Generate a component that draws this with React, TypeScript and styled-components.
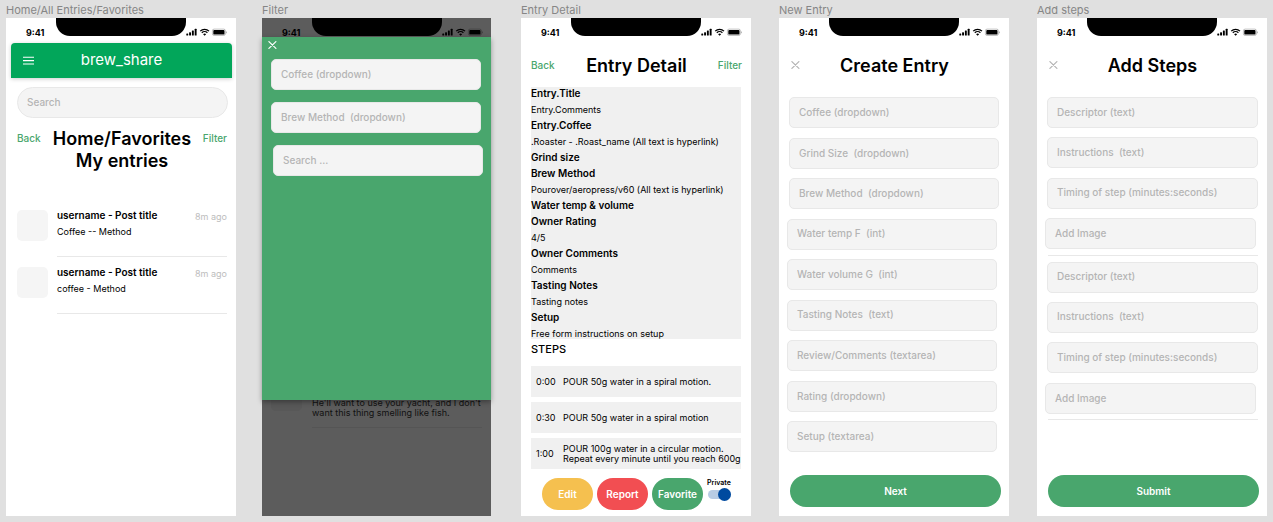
import React from 'react';
import styled, { createGlobalStyle, css } from 'styled-components';

const GlobalStyle = createGlobalStyle`
  *, *::before, *::after { box-sizing: border-box; }
  body {
    margin: 0;
    background: #e0e0e0;
    color: #000;
    font-family: Inter, "Liberation Sans", sans-serif;
  }
  button, input, select, textarea { font: inherit; }
`;

const green = '#49a66d';

/* ---------- board ---------- */

const Board = styled.main`
  display: flex;
  min-height: 100vh;
  padding: 0 6px 6px;
`;

const Artboard = styled.section<{ $gap?: number }>`
  display: flex;
  flex: 1 1 0;
  flex-direction: column;
  min-width: 0;
  margin-left: ${(p) => p.$gap ?? 0}px;
`;

const ArtboardName = styled.h2`
  height: 18px;
  margin: 0;
  color: #868686;
  font-size: 11px;
  font-weight: 400;
  line-height: 20px;
  white-space: nowrap;
`;

const Phone = styled.div<{ $dimmed?: boolean }>`
  display: flex;
  flex: 1;
  flex-direction: column;
  margin-right: ${(p) => (p.$dimmed ? 1 : 0)}px;
  background: ${(p) => (p.$dimmed ? '#5c5c5c' : '#fff')};
`;

/* ---------- status bar ---------- */

const StatusBar = styled.div<{ $short?: boolean }>`
  display: grid;
  grid-template-columns: 1fr 130px 1fr;
  height: ${(p) => (p.$short ? 19 : 25)}px;
`;

const Clock = styled.span`
  padding-left: 20px;
  font-size: 9px;
  font-weight: 700;
  line-height: 29px;
`;

const Notch = styled.div`
  height: 18px;
  background: #000;
  border-radius: 0 0 14px 14px;
`;

const Signals = styled.svg`
  display: block;
  width: 41px;
  height: 8px;
  margin-top: 10px;
`;

function Status({ short }: { short?: boolean }) {
  return (
    <StatusBar $short={short}>
      <Clock>9:41</Clock>
      <Notch />
      <Signals viewBox="0 0 41 8" aria-hidden="true">
        <rect x="0.3" y="5.6" width="1.9" height="2" rx="0.5" />
        <rect x="3.1" y="4.3" width="1.9" height="3.3" rx="0.5" />
        <rect x="5.9" y="2.6" width="1.9" height="5" rx="0.5" />
        <rect x="8.7" y="0.8" width="1.9" height="6.8" rx="0.5" />
        <path d="M14.2 3.1a6.3 6.3 0 0 1 8.8 0" fill="none" stroke="#000" strokeWidth="1.3" />
        <path d="M15.8 4.8a4 4 0 0 1 5.6 0" fill="none" stroke="#000" strokeWidth="1.2" />
        <path d="M17.1 6.3a2.2 2.2 0 0 1 3 0L18.6 7.8z" />
        <rect x="26.4" y="1.1" width="13" height="6.4" rx="1.7" fill="none" stroke="#000" strokeOpacity="0.4" strokeWidth="0.6" />
        <rect x="27.3" y="2" width="11.2" height="4.6" rx="0.9" />
        <path d="M40 3.2v2.3q.8-.3.8-1.15T40 3.2z" opacity="0.4" />
      </Signals>
    </StatusBar>
  );
}

/* ---------- shared parts ---------- */

const PageHead = styled.header`
  display: grid;
  grid-template-columns: 1fr auto 1fr;
  padding: 12px 9px 10px 10px;
  line-height: 22px;
`;

const PageTitle = styled.h1`
  margin: 0;
  font-size: 18px;
  font-weight: 600;
  line-height: 22px;
  text-align: center;
  white-space: nowrap;
`;

const HeadLink = styled.a<{ $end?: boolean }>`
  justify-self: ${(p) => (p.$end ? 'end' : 'start')};
  color: ${green};
  font-size: 10px;
  font-weight: 500;
  line-height: 21px;
  text-decoration: none;
`;

const IconButton = styled.button<{ $tone: string }>`
  display: flex;
  align-items: center;
  align-self: start;
  height: 20px;
  padding: 0 2px;
  border: 0;
  background: none;
  color: ${(p) => p.$tone};
`;

const CrossIcon = () => (
  <svg width="9" height="8" viewBox="0 0 9 8" fill="none" stroke="currentColor" strokeWidth="1.2" strokeLinecap="round">
    <path d="M0.9 0.6l7 6.8M7.9 0.6l-7 6.8" />
  </svg>
);

type Side = 'start' | 'end';

const fieldStyle = css<{ $side?: Side }>`
  display: block;
  flex: none;
  align-self: flex-${(p) => p.$side ?? 'start'};
  width: calc(100% - 2px);
  height: 31px;
  margin: 0;
  padding: 0 9px;
  border: 1px solid #e8e8e8;
  border-radius: 5px;
  outline: 0;
  appearance: none;
  background: #f4f4f4;
  color: #b4b4b4;
  font-size: 10px;
  font-weight: 500;
  line-height: 29px;
  text-align: left;
  &::placeholder { color: #b4b4b4; opacity: 1; }
`;

const TextField = styled.input`
  ${fieldStyle}
  padding-bottom: 2px;
`;
const SelectField = styled.select`${fieldStyle}`;
const FileField = styled.button`${fieldStyle}`;
const AreaField = styled.textarea`
  ${fieldStyle}
  overflow: hidden;
  resize: none;
`;

const SearchField = styled(TextField)`
  width: auto;
  align-self: stretch;
  margin: 9px 8px 0 11px;
  border-radius: 16px;
`;

type Kind = 'select' | 'text' | 'area' | 'file';

function Field({ kind, text, side }: { kind: Kind; text: string; side?: Side }) {
  if (kind === 'select') {
    return (
      <SelectField $side={side} aria-label={text} defaultValue="">
        <option value="">{text}</option>
      </SelectField>
    );
  }
  if (kind === 'area') return <AreaField $side={side} rows={1} aria-label={text} placeholder={text} />;
  if (kind === 'file') return <FileField $side={side} type="button">{text}</FileField>;
  return <TextField $side={side} type="text" aria-label={text} placeholder={text} />;
}

const PillButton = styled.button<{ $tone?: string }>`
  height: 32px;
  padding: 0;
  border: 0;
  border-radius: 16px;
  background: ${(p) => p.$tone ?? green};
  color: #fff;
  font-size: 10px;
  font-weight: 600;
`;

const Footer = styled.footer`
  display: grid;
  padding: 0 8px 9px 11px;
`;

/* ---------- home ---------- */

const AppBar = styled.div`
  display: grid;
  grid-template-columns: 1fr auto 1fr;
  align-items: center;
  height: 35px;
  margin: 0 4px 0 5px;
  border-radius: 4px 4px 0 0;
  background: #02a65a;
  box-shadow: 0 1px 4px rgba(0, 0, 0, 0.2);
  color: #fff;
`;

const MenuButton = styled.button`
  justify-self: start;
  padding: 0 12px;
  border: 0;
  background: none;
  line-height: 0;
`;

const Brand = styled.span`
  padding-bottom: 2px;
  font-size: 15px;
  font-weight: 400;
  line-height: 20px;
`;

const HomeHead = styled(PageHead)`
  padding-top: 10px;
  padding-left: 11px;
`;

const Posts = styled.ul`
  display: grid;
  gap: 10px;
  margin: 0;
  padding: 28px 9px 0 11px;
  list-style: none;
`;

const Post = styled.li`
  display: grid;
  grid-template-columns: 31px 1fr;
  gap: 9px;
`;

const Thumb = styled.div<{ $dimmed?: boolean }>`
  height: 31px;
  border-radius: 5px;
  background: ${(p) => (p.$dimmed ? '#585858' : '#f5f5f5')};
`;

const PostText = styled.div`
  display: grid;
  grid-template-columns: 1fr auto;
  grid-template-rows: 12px 20px;
  height: 47px;
  border-bottom: 1px solid #e8e8e8;
  line-height: 12px;
`;

const PostTitle = styled.h3`
  margin: 0;
  font-size: 10px;
  font-weight: 600;
  line-height: 11px;
`;

const PostTime = styled.span`
  color: #bdbdbd;
  font-size: 9px;
  line-height: 14px;
`;

const PostMethod = styled.span`
  font-size: 9px;
  line-height: 20px;
`;

/* ---------- filter ---------- */

const FilterPanel = styled.div`
  display: flex;
  z-index: 1;
  flex-direction: column;
  gap: 12px;
  min-height: 363px;
  padding: 0 8px 0 9px;
  background: ${green};
  box-shadow: 0 2px 5px rgba(0, 0, 0, 0.35);
`;

const PanelClose = styled(IconButton)`
  height: 16px;
  margin: 0 -3px -6px;
  padding: 0;
`;

const Backdrop = styled.div`
  display: grid;
  grid-template-columns: 31px 1fr;
  align-items: start;
  gap: 10px;
  margin-top: -2px;
  padding: 0 9px;
`;

const BackdropThumb = styled(Thumb)`
  height: 13px;
  border-radius: 0 0 5px 5px;
`;

const BackdropText = styled.p`
  height: 30px;
  margin: 0;
  border-bottom: 1px solid #555;
  color: #111;
  font-size: 9px;
  line-height: 10px;
  white-space: nowrap;
`;

/* ---------- entry detail ---------- */

const Details = styled.dl`
  display: grid;
  gap: 4px;
  margin: 0 10px;
  background: #f0f0f0;
  line-height: 12px;
  dt { font-size: 10px; font-weight: 600; }
  dd { height: 12px; margin: 0; font-size: 9px; line-height: 14px; }
`;

const StepsTitle = styled.h3`
  margin: 0 10px;
  font-size: 11px;
  font-weight: 500;
  line-height: 21px;
`;

const Steps = styled.ol`
  display: grid;
  gap: 5px;
  margin: 0;
  padding: 6px 10px 0;
  list-style: none;
`;

const Step = styled.li`
  display: grid;
  grid-template-columns: 27px 1fr;
  align-items: center;
  height: 31px;
  padding-left: 5px;
  background: #f0f0f0;
  font-size: 9px;
  line-height: 10px;
  white-space: pre-line;
`;

const Actions = styled.footer`
  display: grid;
  grid-template-columns: repeat(3, 51px) auto;
  gap: 4px;
  margin-top: auto;
  padding: 0 20px 6px 21px;
`;

const Toggle = styled.label`
  display: grid;
  justify-items: center;
  align-content: start;
  padding-top: 1px;
  font-size: 7px;
  font-weight: 600;
  line-height: 8px;
`;

const Switch = styled.input`
  display: flex;
  align-items: center;
  justify-content: flex-end;
  appearance: none;
  width: 23px;
  height: 9px;
  margin: 3px 0 0;
  border-radius: 5px;
  background: #b8cce4;
  &::after {
    content: '';
    width: 13px;
    height: 13px;
    border-radius: 50%;
    background: #004a9f;
  }
`;

/* ---------- forms ---------- */

const Form = styled.div<{ $gap: number; $end: number }>`
  display: flex;
  flex: 1;
  flex-direction: column;
  justify-content: space-between;
  gap: ${(p) => p.$gap}px;
  padding: 10px ${(p) => p.$end}px 0 8px;
`;

const StepGroup = styled.div`
  display: flex;
  flex: 1;
  flex-direction: column;
  justify-content: space-between;
`;

const Rule = styled.hr`
  width: calc(100% - 3px);
  margin: -4px 0 0 3px;
  border: 0;
  border-top: 1px solid #e8e8e8;
`;

const FormFooter = styled(Footer)<{ $space: number }>`
  padding-top: ${(p) => p.$space}px;
`;

/* ---------- data ---------- */

const posts = [
  { title: 'username - Post title', method: 'Coffee -- Method' },
  { title: 'username - Post title', method: 'coffee - Method' },
];

const details: [string, string?][] = [
  ['Entry.Title', 'Entry.Comments'],
  ['Entry.Coffee', '.Roaster - .Roast_name (All text is hyperlink)'],
  ['Grind size'],
  ['Brew Method', 'Pourover/aeropress/v60 (All text is hyperlink)'],
  ['Water temp & volume'],
  ['Owner Rating', '4/5'],
  ['Owner Comments', 'Comments'],
  ['Tasting Notes', 'Tasting notes'],
  ['Setup', 'Free form instructions on setup'],
];

const steps = [
  ['0:00', 'POUR 50g water in a spiral motion.'],
  ['0:30', 'POUR 50g water in a spiral motion'],
  ['1:00', 'POUR 100g water in a circular motion.\nRepeat every minute until you reach 600g'],
];

const entryFields: [Kind, string, Side][] = [
  ['select', 'Coffee (dropdown)', 'end'],
  ['select', 'Grind Size\u00a0 (dropdown)', 'end'],
  ['select', 'Brew Method\u00a0 (dropdown)', 'end'],
  ['text', 'Water temp F\u00a0 (int)', 'start'],
  ['text', 'Water volume G\u00a0 (int)', 'start'],
  ['text', 'Tasting Notes\u00a0 (text)', 'start'],
  ['area', 'Review/Comments (textarea)', 'start'],
  ['select', 'Rating (dropdown)', 'start'],
  ['area', 'Setup (textarea)', 'start'],
];

const stepFields: [Kind, string, Side][] = [
  ['text', 'Descriptor (text)', 'end'],
  ['text', 'Instructions\u00a0 (text)', 'end'],
  ['text', 'Timing of step (minutes:seconds)', 'end'],
  ['file', 'Add Image', 'start'],
];

export default function App() {
  return (
    <>
      <GlobalStyle />
      <Board>
        <Artboard>
          <ArtboardName>Home/All Entries/Favorites</ArtboardName>
          <Phone>
            <Status />
            <AppBar>
              <MenuButton aria-label="Menu">
                <svg width="11" height="9" viewBox="0 0 11 9" stroke="#fff" strokeWidth="1.1">
                  <path d="M0 1.2h11M0 4.6h11M0 8h11" />
                </svg>
              </MenuButton>
              <Brand>brew_share</Brand>
            </AppBar>
            <SearchField type="search" aria-label="Search" placeholder="Search" />
            <HomeHead>
              <HeadLink href="#back">Back</HeadLink>
              <PageTitle>Home/Favorites<br />My entries</PageTitle>
              <HeadLink href="#filter" $end>Filter</HeadLink>
            </HomeHead>
            <Posts>
              {posts.map((post) => (
                <Post key={post.method}>
                  <Thumb />
                  <PostText>
                    <PostTitle>{post.title}</PostTitle>
                    <PostTime>8m ago</PostTime>
                    <PostMethod>{post.method}</PostMethod>
                  </PostText>
                </Post>
              ))}
            </Posts>
          </Phone>
        </Artboard>

        <Artboard $gap={26}>
          <ArtboardName>Filter</ArtboardName>
          <Phone $dimmed>
            <Status short />
            <FilterPanel>
              <PanelClose $tone="#fff" aria-label="Close">
                <CrossIcon />
              </PanelClose>
              <Field kind="select" text="Coffee (dropdown)" />
              <Field kind="select" text={'Brew Method\u00a0 (dropdown)'} />
              <Field kind="text" text="Search ..." side="end" />
            </FilterPanel>
            <Backdrop>
              <BackdropThumb $dimmed />
              <BackdropText>He'll want to use your yacht, and I don't<br />want this thing smelling like fish.</BackdropText>
            </Backdrop>
          </Phone>
        </Artboard>

        <Artboard $gap={29}>
          <ArtboardName>Entry Detail</ArtboardName>
          <Phone>
            <Status />
            <PageHead>
              <HeadLink href="#back">Back</HeadLink>
              <PageTitle>Entry Detail</PageTitle>
              <HeadLink href="#filter" $end>Filter</HeadLink>
            </PageHead>
            <Details>
              {details.map(([term, value]) => (
                <React.Fragment key={term}>
                  <dt>{term}</dt>
                  {value && <dd>{value}</dd>}
                </React.Fragment>
              ))}
            </Details>
            <StepsTitle>STEPS</StepsTitle>
            <Steps>
              {steps.map(([time, text]) => (
                <Step key={time}>
                  <span>{time}</span>
                  <span>{text}</span>
                </Step>
              ))}
            </Steps>
            <Actions>
              <PillButton $tone="#f5c04f">Edit</PillButton>
              <PillButton $tone="#f24e52">Report</PillButton>
              <PillButton>Favorite</PillButton>
              <Toggle>
                Private
                <Switch type="checkbox" role="switch" defaultChecked />
              </Toggle>
            </Actions>
          </Phone>
        </Artboard>

        <Artboard $gap={28}>
          <ArtboardName>New Entry</ArtboardName>
          <Phone>
            <Status />
            <PageHead>
              <IconButton $tone="#b4b4b4" aria-label="Close"><CrossIcon /></IconButton>
              <PageTitle>Create Entry</PageTitle>
            </PageHead>
            <Form $gap={0} $end={10}>
              {entryFields.map(([kind, text, side]) => (
                <Field key={text} kind={kind} text={text} side={side} />
              ))}
            </Form>
            <FormFooter $space={23}>
              <PillButton>Next</PillButton>
            </FormFooter>
          </Phone>
        </Artboard>

        <Artboard $gap={28}>
          <ArtboardName>Add steps</ArtboardName>
          <Phone>
            <Status />
            <PageHead>
              <IconButton $tone="#b4b4b4" aria-label="Close"><CrossIcon /></IconButton>
              <PageTitle>Add Steps</PageTitle>
            </PageHead>
            <Form $gap={6} $end={9}>
              {[1, 2].map((group) => (
                <StepGroup key={group}>
                  {stepFields.map(([kind, text, side]) => (
                    <Field key={text} kind={kind} text={text} side={side} />
                  ))}
                  <Rule />
                </StepGroup>
              ))}
            </Form>
            <FormFooter $space={55}>
              <PillButton>Submit</PillButton>
            </FormFooter>
          </Phone>
        </Artboard>
      </Board>
    </>
  );
}
